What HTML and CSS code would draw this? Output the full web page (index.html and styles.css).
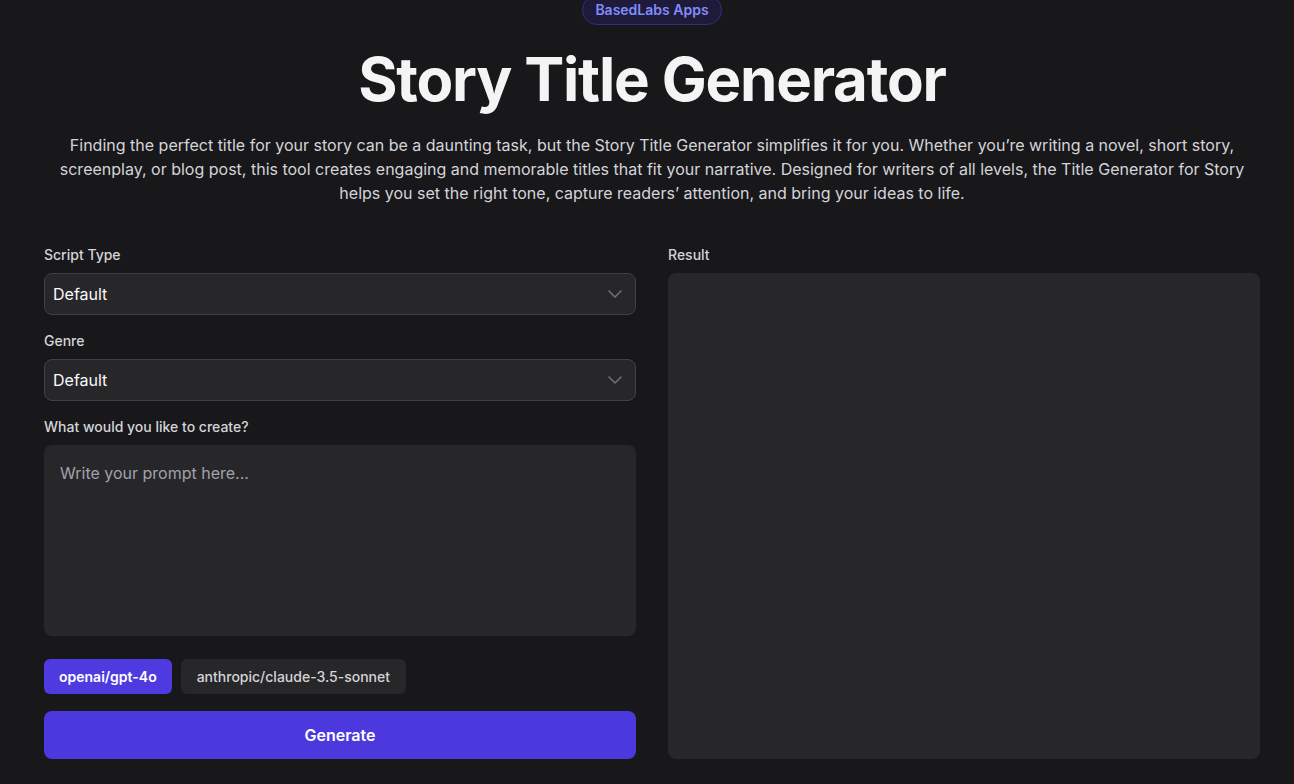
FILE: index.html
```html
<!DOCTYPE html>
<html lang="en">
<head>
<meta charset="UTF-8">
<meta name="viewport" content="width=device-width, initial-scale=1.0">
<title>Story Title Generator</title>
<link rel="stylesheet" href="styles.css">
</head>
<body>

<div class="page">
    <header class="hero">
        <span class="badge">BasedLabs Apps</span>
        <h1>Story Title Generator</h1>
        <p>Finding the perfect title for your story can be a daunting task, but the Story Title Generator simplifies it for you. Whether you’re writing a novel, short story, screenplay, or blog post, this tool creates engaging and memorable titles that fit your narrative. Designed for writers of all levels, the Title Generator for Story helps you set the right tone, capture readers’ attention, and bring your ideas to life.</p>
    </header>

    <div class="tool">
        <form class="form-col">
            <label class="field-label" for="scriptType">Script Type</label>
            <div class="select-wrap">
                <select id="scriptType">
                    <option>Default</option>
                </select>
                <svg class="chevron" width="24" height="24" viewBox="0 0 24 24" fill="none" stroke="currentColor" stroke-width="1.5" stroke-linecap="round" stroke-linejoin="round"><path d="m6 9 6 6 6-6"/></svg>
            </div>

            <label class="field-label" for="genre">Genre</label>
            <div class="select-wrap">
                <select id="genre">
                    <option>Default</option>
                </select>
                <svg class="chevron" width="24" height="24" viewBox="0 0 24 24" fill="none" stroke="currentColor" stroke-width="1.5" stroke-linecap="round" stroke-linejoin="round"><path d="m6 9 6 6 6-6"/></svg>
            </div>

            <label class="field-label" for="prompt">What would you like to create?</label>
            <textarea id="prompt" placeholder="Write your prompt here..."></textarea>

            <div class="models">
                <button type="button" class="model active">openai/gpt-4o</button>
                <button type="button" class="model">anthropic/claude-3.5-sonnet</button>
            </div>

            <button type="submit" class="generate">Generate</button>
        </form>

        <div class="result-col">
            <div class="field-label">Result</div>
            <div class="result-box"></div>
        </div>
    </div>
</div>

</body>
</html>
```

FILE: styles.css
```css
* {
    box-sizing: border-box;
}
body {
    margin: 0;
    padding-left: 10px;
    background-color: #18181b;
    color: #f4f4f5;
    font-family: Inter, "Noto Sans", sans-serif;
}
.page {
    max-width: 1216px;
    margin: 0 auto;
}
.hero {
    display: flex;
    flex-direction: column;
    align-items: center;
    text-align: center;
    margin-top: -5px;
}
.badge {
    padding: 4px 12px;
    border: 1px solid #312e81;
    border-radius: 999px;
    background-color: #1e1b3a;
    color: #818cf8;
    font-size: 14px;
    font-weight: 600;
    line-height: 20px;
}
h1 {
    margin: 24px 0 0;
    font-size: 60px;
    line-height: 60px;
    font-weight: 700;
    letter-spacing: -1.2px;
    color: #f4f4f5;
}
.hero p {
    margin: 24px 0 0;
    font-size: 16px;
    line-height: 24px;
    color: #d4d4d8;
}
.tool {
    display: grid;
    grid-template-columns: 1fr 1fr;
    gap: 32px;
    margin-top: 41px;
}
.form-col,
.result-col {
    display: flex;
    flex-direction: column;
}
.field-label {
    display: block;
    margin-bottom: 9px;
    font-size: 14px;
    font-weight: 500;
    line-height: 18px;
    color: #d4d4d8;
}
.select-wrap {
    position: relative;
    margin-bottom: 17px;
}
select {
    width: 100%;
    height: 42px;
    padding: 0 8px;
    appearance: none;
    background-color: #27272a;
    border: 1px solid #3f3f46;
    border-radius: 8px;
    color: #fafafa;
    font-family: inherit;
    font-size: 16px;
}
.chevron {
    position: absolute;
    right: 9px;
    top: 9px;
    color: #71717a;
    pointer-events: none;
}
textarea {
    height: 191px;
    padding: 16px;
    resize: none;
    background-color: #27272a;
    border: none;
    border-radius: 8px;
    color: #fafafa;
    font-family: inherit;
    font-size: 16px;
    line-height: 24px;
}
textarea::placeholder {
    color: #a1a1aa;
}
.models {
    display: flex;
    gap: 9px;
    margin-top: 23px;
}
.model {
    height: 35px;
    padding: 0 16px;
    border: none;
    border-radius: 6px;
    background-color: #27272a;
    color: #d4d4d8;
    font-family: inherit;
    font-size: 14px;
    font-weight: 500;
}
.model.active {
    padding: 0 15px;
    background-color: #4f3ae0;
    color: #ffffff;
    font-weight: 600;
}
.generate {
    height: 48px;
    margin-top: 17px;
    border: none;
    border-radius: 8px;
    background-color: #4c39de;
    color: #ffffff;
    font-family: inherit;
    font-size: 16px;
    font-weight: 600;
    cursor: pointer;
}
.result-box {
    flex: 1;
    background-color: #27272a;
    border-radius: 8px;
}
```
